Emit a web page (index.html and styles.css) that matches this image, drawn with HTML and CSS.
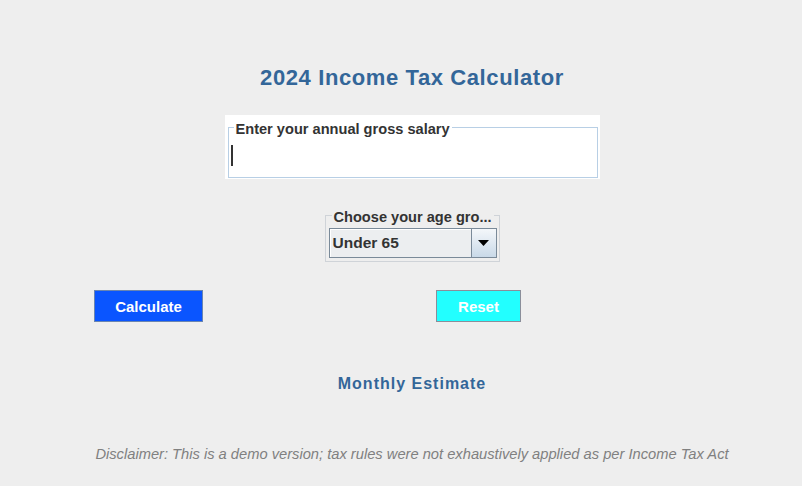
FILE: index.html
```html
<!DOCTYPE html>
<html>
<head>
<meta charset="utf-8">
<link rel="stylesheet" href="styles.css">
</head>
<body>
<div class="app">
  <h1 class="title">2024 Income Tax Calculator</h1>
  <div class="salary-panel">
    <fieldset class="salary-box">
      <legend class="legend">Enter your annual gross salary</legend>
      <div class="field"><span class="caret"></span></div>
    </fieldset>
  </div>
  <fieldset class="age-box">
    <legend class="legend">Choose your age gro...</legend>
    <div class="combo">
      <span class="combo-text">Under 65</span>
      <span class="combo-arrow"><svg width="11" height="6" viewBox="0 0 11 6"><path d="M0 0H11L5.5 6Z" fill="#000"/></svg></span>
    </div>
  </fieldset>
  <div class="buttons">
    <button class="btn btn-calc">Calculate</button>
    <button class="btn btn-reset">Reset</button>
  </div>
  <div class="estimate">Monthly Estimate</div>
  <div class="disclaimer">Disclaimer: This is a demo version; tax rules were not exhaustively applied as per Income Tax Act</div>
</div>
</body>
</html>
```
FILE: styles.css
```css
html, body {
  margin: 0;
  padding: 0;
  background: #eeeeee;
}
body {
  width: 802px;
  height: 486px;
  overflow: hidden;
  font-family: "Liberation Sans", Arial, sans-serif;
}
.app {
  display: flex;
  flex-direction: column;
  align-items: center;
  padding-left: 22px;
  box-sizing: border-box;
  width: 802px;
}
.title {
  margin: 65px 0 0;
  font-size: 22px;
  line-height: 26px;
  font-weight: bold;
  letter-spacing: 0.6px;
  color: #336699;
}
.salary-panel {
  margin-top: 24px;
  background: #ffffff;
  padding: 2px 2px 1px 3px;
}
.salary-box {
  margin: 0;
  width: 370px;
  box-sizing: border-box;
  border: 1px solid #b8cfe5;
  padding: 8px 0 11px 2px;
}
.legend {
  margin-left: 3px;
  padding: 4px 2px 0;
  font-size: 14.6px;
  line-height: 16px;
  font-weight: bold;
  color: #333333;
}
.field {
  height: 21px;
  display: flex;
}
.caret {
  width: 2px;
  height: 21px;
  background: #333333;
}
.age-box {
  margin: 26px 0 0;
  width: 175px;
  box-sizing: border-box;
  border: 1px solid #cfd3d8;
  padding: 3px 2px 3px 3px;
}
.combo {
  display: flex;
  height: 30px;
  box-sizing: border-box;
  border: 1px solid #7a8a99;
  background: #eceef0;
}
.combo-text {
  flex: 1;
  display: flex;
  align-items: center;
  padding-left: 3px;
  font-size: 15.5px;
  font-weight: bold;
  color: #333333;
  box-shadow: inset 1px 1px 0 #ffffff;
}
.combo-arrow {
  width: 24px;
  display: flex;
  align-items: center;
  justify-content: center;
  border-left: 1px solid #7a8a99;
  background: linear-gradient(#f4f7fa, #c9d9e8);
}
.buttons {
  align-self: flex-start;
  margin: 28px 0 0 72px;
  display: flex;
  gap: 233px;
}
.btn {
  height: 32px;
  margin: 0;
  padding: 1px 0 0;
  font-family: "Liberation Sans", Arial, sans-serif;
  font-size: 15px;
  font-weight: bold;
  color: #ffffff;
  cursor: pointer;
}
.btn-calc {
  width: 109px;
  background: #0a55ff;
  border: 1px solid #6a85b0;
}
.btn-reset {
  width: 85px;
  background: #22ffff;
  border: 1px solid #8a8e9a;
}
.estimate {
  margin-top: 52px;
  font-size: 16px;
  line-height: 20px;
  font-weight: bold;
  letter-spacing: 1px;
  color: #336699;
}
.disclaimer {
  margin-top: 52px;
  font-size: 14.7px;
  line-height: 16px;
  font-style: italic;
  color: #808080;
}
```
